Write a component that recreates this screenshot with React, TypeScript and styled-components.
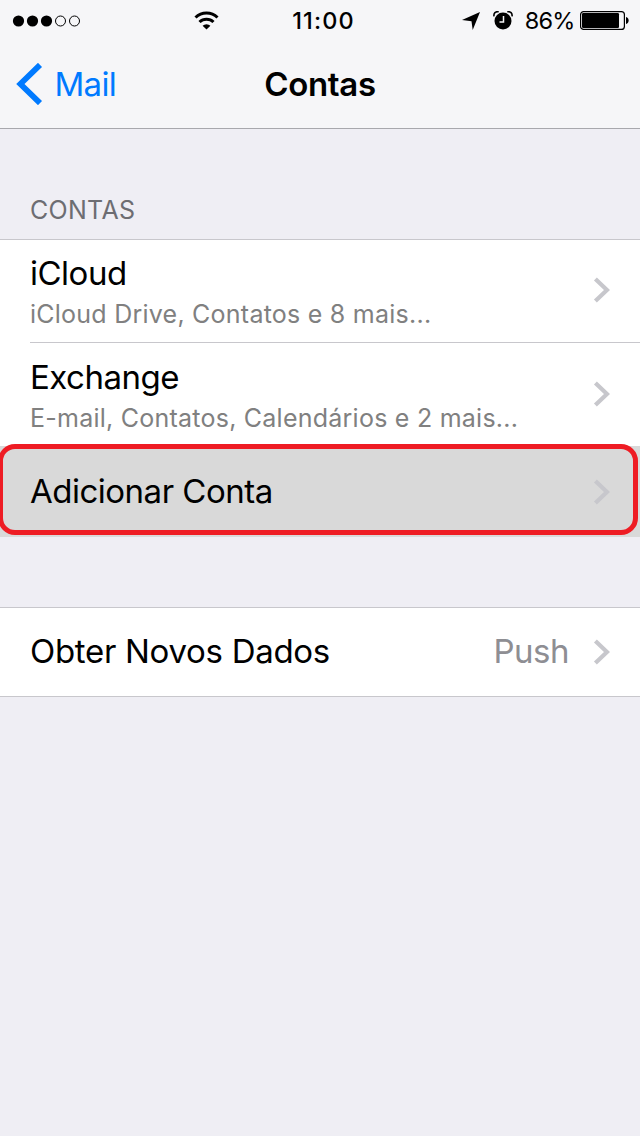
import React from "react";
import styled, { createGlobalStyle } from "styled-components";

const GlobalStyle = createGlobalStyle`
  * { box-sizing: border-box; }
  body {
    margin: 0;
    background: #efeef4;
    font-family: Inter, "Liberation Sans", sans-serif;
    color: #000;
  }
`;

const Screen = styled.main`
  width: 640px;
  height: 1136px;
  overflow: hidden;
  background: #efeef4;
`;

const Header = styled.header`
  height: 129px;
  background: #f6f6f8;
  border-bottom: 1px solid #a8a8ad;
`;

const StatusBar = styled.div`
  height: 40px;
  display: grid;
  grid-template-columns: 1fr auto 1fr;
  align-items: center;
  padding: 0 11px 0 12px;
`;

const StatusGroup = styled.div<{ $end?: boolean }>`
  display: flex;
  align-items: center;
  justify-content: ${(p) => (p.$end ? "flex-end" : "flex-start")};
  svg { display: block; flex: none; }
`;

const Wifi = styled.svg`
  margin-left: 113px;
`;

const Alarm = styled.svg`
  margin-left: 13px;
`;

const Clock = styled.time`
  font-size: 23.5px;
  font-weight: 550;
  line-height: 40px;
  letter-spacing: 1.1px;
  padding: 1px 0 0 6px;
`;

const Percent = styled.span`
  font-size: 23.5px;
  line-height: 40px;
  letter-spacing: -0.8px;
  margin: 1px 5.5px 0 12px;
`;

const NavBar = styled.nav`
  height: 88px;
  display: grid;
  grid-template-columns: 1fr auto 1fr;
  align-items: center;
  line-height: 88px;
`;

const Back = styled.a`
  display: flex;
  align-items: center;
  gap: 10.5px;
  padding-left: 16px;
  color: #007aff;
  font-size: 33px;
  letter-spacing: -0.7px;
`;

const Title = styled.h1`
  margin: 0;
  font-size: 33px;
  font-weight: 600;
  line-height: 88px;
  letter-spacing: -0.3px;
`;

const SectionTitle = styled.h2`
  margin: 0;
  height: 110px;
  padding: 61px 30px 0;
  font-size: 25px;
  font-weight: 400;
  line-height: 40px;
  letter-spacing: 0.3px;
  color: #6d6d72;
`;

const List = styled.section<{ $gap?: number; $closed?: boolean }>`
  margin-top: ${(p) => p.$gap ?? 0}px;
  border-top: 1px solid #c8c7cc;
  border-bottom: ${(p) => (p.$closed ? "1px solid #c8c7cc" : "0")};
  background: #fff;
`;

const Row = styled.div<{ $height: number; $selected?: boolean }>`
  position: relative;
  height: ${(p) => p.$height}px;
  padding: 0 30px;
  display: flex;
  align-items: center;
  justify-content: space-between;
  background: ${(p) => (p.$selected ? "#d9d9d9" : "#fff")};
`;

const AccountRow = styled(Row)`
  padding-bottom: 2px;
`;

const Divider = styled.hr`
  height: 1px;
  margin: 0 0 0 30px;
  border: 0;
  background: #c8c7cc;
`;

const Labels = styled.div<{ $top: number }>`
  align-self: flex-start;
  padding-top: ${(p) => p.$top}px;
`;

const Label = styled.div<{ $spacing?: number }>`
  font-size: 33px;
  line-height: 40px;
  letter-spacing: ${(p) => p.$spacing ?? -0.5}px;
  white-space: nowrap;
`;

const SingleLabel = styled(Label)`
  padding-bottom: 2px;
`;

const Detail = styled.div`
  font-size: 25px;
  line-height: 42px;
  letter-spacing: 0.24px;
  color: #808080;
  white-space: nowrap;
`;

const Accessory = styled.div`
  display: flex;
  align-items: center;
  gap: 24px;
  svg { display: block; }
`;

const Value = styled(SingleLabel)`
  color: #8e8e93;
`;

const Highlight = styled.div`
  position: absolute;
  left: -2px;
  top: -2px;
  width: 640px;
  height: 91px;
  border: 5px solid #ee1c24;
  border-radius: 17px;
`;

const Chevron = () => (
  <svg width="17" height="26" viewBox="0 0 17 26">
    <path d="M2.400 1.900 14 13 2.400 24.100" fill="none" stroke="#c7c7cc" strokeWidth="4.2" />
  </svg>
);

export default function App() {
  return (
    <>
      <GlobalStyle />
      <Screen>
        <Header>
          <StatusBar>
            <StatusGroup>
              <svg width="69" height="12" viewBox="0 0 69 12">
                {[0, 1, 2, 3, 4].map((i) =>
                  i < 3 ? (
                    <circle key={i} cx={6.5 + i * 14} cy="6" r="5.6" />
                  ) : (
                    <circle key={i} cx={6.5 + i * 14} cy="6" r="5" fill="none" stroke="#000" />
                  )
                )}
              </svg>
              <Wifi width="25" height="19" viewBox="0 0 25 19">
                <g fill="none" stroke="#000" strokeWidth="3">
                  <path d="M1.5 6.500a15.600 15.600 0 0 1 22 0" />
                  <path d="M5.500 11a10 10 0 0 1 14 0" />
                </g>
                <path d="M12.5 18.500 8.600 14.800a5.700 5.700 0 0 1 7.800 0Z" />
              </Wifi>
            </StatusGroup>
            <Clock>11:00</Clock>
            <StatusGroup $end>
              <svg width="18" height="18" viewBox="0 0 18 18">
                <path d="M18 0 10.700 18 9.500 9.200 0 8Z" />
              </svg>
              <Alarm width="20" height="19" viewBox="0 0 20 19">
                <circle cx="10" cy="10" r="8.5" />
                <path d="M1 5.3C.4 2.2 2.5.2 5.7.8M19 5.3C19.6 2.2 17.5.2 14.3.8" fill="none" stroke="#000" strokeWidth="1.6" />
                <path d="M10.500 5v6H6.500" fill="none" stroke="#f6f6f8" strokeWidth="1.5" />
              </Alarm>
              <Percent>86%</Percent>
              <svg width="49" height="19" viewBox="0 0 49 19">
                <rect x=".6" y=".6" width="43.8" height="17.8" rx="3" fill="none" stroke="#000" strokeWidth="1.2" />
                <rect x="2" y="2" width="37" height="15" rx="1.2" />
                <path d="M46 6c3.5 .5 3.5 6.500 0 7Z" />
              </svg>
            </StatusGroup>
          </StatusBar>
          <NavBar>
            <Back>
              <svg width="28" height="42" viewBox="0 0 28 42">
                <path d="M24 1.900 4.400 21l19.600 19.100" fill="none" stroke="#007aff" strokeWidth="5.8" />
              </svg>
              Mail
            </Back>
            <Title>Contas</Title>
          </NavBar>
        </Header>

        <SectionTitle>CONTAS</SectionTitle>
        <List>
          <AccountRow $height={102}>
            <Labels $top={13}>
              <Label>iCloud</Label>
              <Detail>iCloud Drive, Contatos e 8 mais...</Detail>
            </Labels>
            <Chevron />
          </AccountRow>
          <Divider />
          <AccountRow $height={103}>
            <Labels $top={14}>
              <Label>Exchange</Label>
              <Detail>E-mail, Contatos, Calendários e 2 mais...</Detail>
            </Labels>
            <Chevron />
          </AccountRow>
          <Row $height={91} $selected>
            <SingleLabel>Adicionar Conta</SingleLabel>
            <Chevron />
            <Highlight />
          </Row>
        </List>

        <List $gap={70} $closed>
          <Row $height={88}>
            <SingleLabel $spacing={-0.3}>Obter Novos Dados</SingleLabel>
            <Accessory>
              <Value>Push</Value>
              <Chevron />
            </Accessory>
          </Row>
        </List>
      </Screen>
    </>
  );
}
